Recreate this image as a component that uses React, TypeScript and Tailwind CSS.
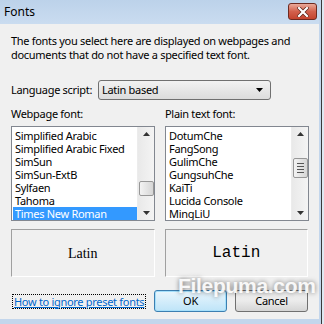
import React from 'react';

const webFonts = [
  'Simplified Arabic',
  'Simplified Arabic Fixed',
  'SimSun',
  'SimSun-ExtB',
  'Sylfaen',
  'Tahoma',
  'Times New Roman',
];

const plainFonts = ['DotumChe', 'FangSong', 'GulimChe', 'GungsuhChe', 'KaiTi', 'Lucida Console', 'MingLiU'];

const ui = "font-['Noto_Sans',sans-serif] text-[11px] tracking-[-0.3px]";

// classic Win7 scrollbar
const ScrollBar = ({ thumbTop, grip }: { thumbTop: number; grip?: boolean }) => (
  <div className="w-[17px] h-full bg-gradient-to-r from-[#e9e9e9] to-[#f4f4f4] border-l border-[#ececec] relative flex flex-col justify-between items-center py-[3px]">
    <svg width="7" height="4" viewBox="0 0 7 4" className="mt-[2px]">
      <path d="M0 4 L3.5 0 L7 4 Z" fill="#333" />
    </svg>
    <div
      className="absolute left-[1px] w-[15px] rounded-[2px] border border-[#979797] bg-gradient-to-r from-[#f3f3f3] to-[#d6d6d6] flex flex-col items-center justify-center gap-[2px]"
      style={{ top: thumbTop, height: grip ? 20 : 15 }}
    >
      {grip && (
        <>
          <div className="w-[7px] h-px bg-[#555]" />
          <div className="w-[7px] h-px bg-[#555]" />
          <div className="w-[7px] h-px bg-[#555]" />
          <div className="w-[7px] h-px bg-[#555]" />
        </>
      )}
    </div>
    <svg width="7" height="4" viewBox="0 0 7 4" className="mb-[2px]">
      <path d="M0 0 L3.5 4 L7 0 Z" fill="#333" />
    </svg>
  </div>
);

const FontList = ({ items, selected, thumbTop, grip }: { items: string[]; selected?: string; thumbTop: number; grip?: boolean }) => (
  <div className="w-[144px] h-[95px] border border-[#828790] bg-white flex">
    <div className="flex-1 flex flex-col pt-[2px] pl-[1px] overflow-hidden">
      {items.map((f) => (
        <div
          key={f}
          className={`h-[13px] leading-[13px] pl-[2px] whitespace-nowrap ${f === selected ? 'bg-[#3399ff] text-white' : 'text-black'}`}
        >
          {f}
        </div>
      ))}
    </div>
    <ScrollBar thumbTop={thumbTop} grip={grip} />
  </div>
);

export default function App() {
  return (
    <div className={`w-[324px] h-[324px] bg-[#f0f0f0] flex overflow-hidden relative ${ui}`}>
      <div className="w-[319px] h-full flex flex-col">
        {/* Title bar */}
        <div className="h-[24px] shrink-0 bg-gradient-to-b from-[#bcd2ea] to-[#cadcf0] flex items-center justify-between pl-[4px] pr-[2px]">
          <span className="text-[12px] tracking-normal text-black">Fonts</span>
          <div className="w-[29px] h-[17px] rounded-[3px] border border-[#6e2a20] bg-gradient-to-b from-[#e9a99b] via-[#d2604c] to-[#c4432d] flex items-center justify-center -mt-[1px]">
            <svg width="12" height="10" viewBox="0 0 12 10">
              <path d="M2 1 L10 9 M10 1 L2 9" stroke="#5a2318" strokeWidth="3.6" strokeLinecap="square" />
              <path d="M2 1 L10 9 M10 1 L2 9" stroke="#fff" strokeWidth="2.2" strokeLinecap="square" />
            </svg>
          </div>
        </div>

        {/* Body */}
        <div className="flex-1 flex flex-col px-[11px] pt-[10px]">
          <p className="leading-[14px] text-black whitespace-nowrap">
            The fonts you select here are displayed on webpages and
            <br />
            documents that do not have a specified text font.
          </p>

          <div className="flex items-center mt-[18px] h-[20px]">
            <span className="w-[87px] whitespace-nowrap">Language script:</span>
            <div className="w-[173px] h-[20px] rounded-[3px] border border-[#707070] bg-gradient-to-b from-[#f2f2f2] to-[#dcdcdc] flex items-center justify-between pl-[3px] pr-[7px]">
              <span>Latin based</span>
              <svg width="7" height="4" viewBox="0 0 7 4">
                <path d="M0 0 L3.5 4 L7 0 Z" fill="#000" />
              </svg>
            </div>
          </div>

          <div className="flex mt-[7px] gap-[10px]">
            <div className="flex flex-col gap-[5px]">
              <span className="leading-[14px]">Webpage font:</span>
              <FontList items={webFonts} selected="Times New Roman" thumbTop={54} />
            </div>
            <div className="flex flex-col gap-[5px]">
              <span className="leading-[14px]">Plain text font:</span>
              <FontList items={plainFonts} thumbTop={31} grip />
            </div>
          </div>

          <div className="flex mt-[8px] gap-[10px]">
            <div className="w-[144px] h-[48px] border border-[#a0a0a0] border-r-white border-b-white flex items-center justify-center">
              <span className="font-['Liberation_Serif',serif] text-[14px] tracking-normal">Latin</span>
            </div>
            <div className="w-[144px] h-[48px] border border-[#a0a0a0] border-r-white border-b-white flex items-center justify-center">
              <span className="font-['Liberation_Mono',monospace] text-[16px] tracking-normal">Latin</span>
            </div>
          </div>

          <div className="flex items-center mt-[13px]">
            <span className="ml-px border border-dotted border-black px-px leading-[13px] text-[#0066cc] underline whitespace-nowrap">
              How to ignore preset fonts
            </span>
            <div className="ml-auto w-[73px] h-[22px] rounded-[3px] border border-[#3c7fb1] bg-gradient-to-b from-[#eaf6fd] to-[#bee4f8] flex items-center justify-center shadow-[inset_0_0_0_1px_#a6e0fb]">
              OK
            </div>
            <div className="ml-[8px] w-[73px] h-[22px] rounded-[3px] border border-[#707070] bg-gradient-to-b from-[#f2f2f2] via-[#ebebeb] to-[#d5d5d5] flex items-center justify-center">
              Cancel
            </div>
          </div>
        </div>

        {/* bottom frame */}
        <div className="h-[5px] shrink-0 bg-[#c3d6ec]" />
      </div>

      {/* right edge of frame / window behind */}
      <div className="w-[5px] h-full flex">
        <div className="w-[2px] bg-[#c3d6ec]" />
        <div className="w-px bg-[#3a3a3a]" />
        <div className="flex-1 bg-[#dfe8f2]" />
      </div>

      {/* watermark */}
      <span className="absolute left-[178px] top-[270px] text-[21px] font-bold text-white/90 font-['Liberation_Sans',sans-serif] [text-shadow:0_0_5px_rgba(0,0,0,0.55)]">
        Filepuma.com
      </span>
    </div>
  );
}
